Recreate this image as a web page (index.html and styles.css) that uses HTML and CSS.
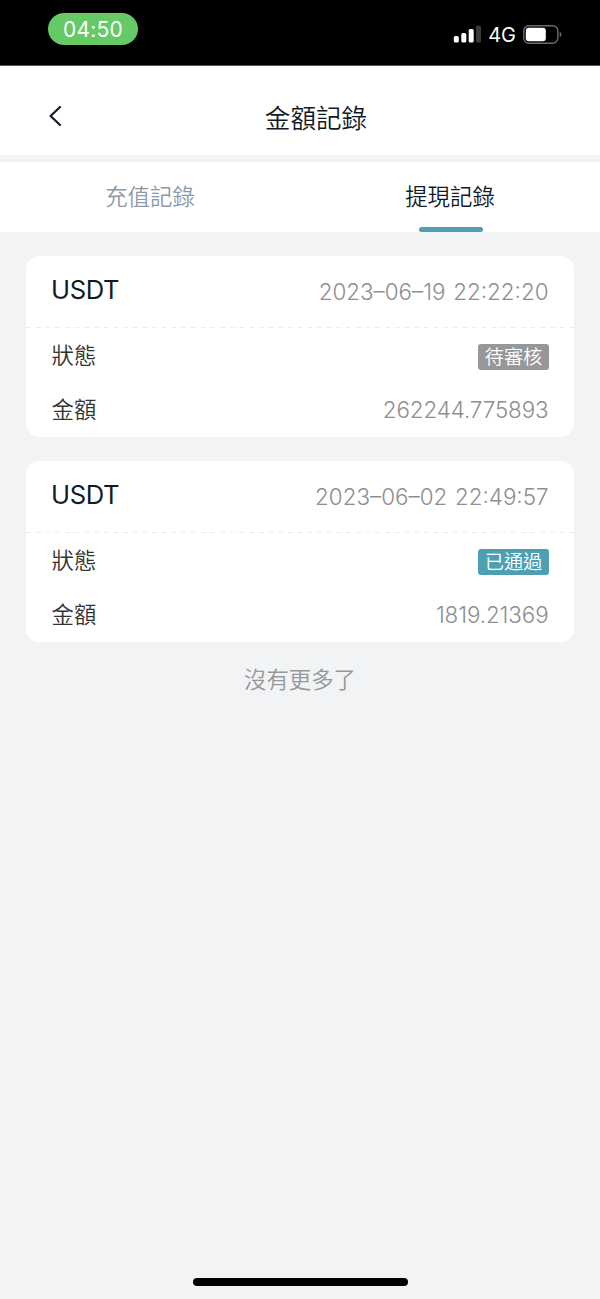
FILE: index.html
```html
<!DOCTYPE html>
<html lang="zh-Hant">
<head>
    <meta charset="UTF-8">
    <meta name="viewport" content="width=device-width, initial-scale=1.0">
    <title>金額記錄</title>
    <link rel="stylesheet" href="styles.css">
</head>
<body>

    <!-- Status bar -->
    <div class="status-bar">
        <span class="clock">04:50</span>
        <div class="status-icons">
            <svg class="signal" width="28" height="18" viewBox="0 0 28 18">
                <rect x="0.8" y="11" width="5" height="6.5" rx="1.6" fill="#fff"/>
                <rect x="8.3" y="8" width="5" height="9.5" rx="1.6" fill="#fff"/>
                <rect x="15.7" y="4" width="5" height="13.5" rx="1.6" fill="#fff"/>
                <rect x="23" y="0.5" width="5" height="17" rx="1.6" fill="#3a3a3a"/>
            </svg>
            <span class="network">4G</span>
            <svg class="battery" width="39" height="19" viewBox="0 0 39 19">
                <rect x="0.8" y="0.8" width="34" height="17.4" rx="5" fill="none" stroke="#6a6a6a" stroke-width="1.4"/>
                <rect x="2.8" y="2.8" width="20" height="13.4" rx="3" fill="#fff"/>
                <path d="M36.7 6.8c2.2 1 2.2 4.4 0 5.4z" fill="#6a6a6a"/>
            </svg>
        </div>
    </div>

    <!-- Header -->
    <header>
        <button class="back-btn" aria-label="返回">
            <svg width="14" height="22" viewBox="0 0 14 22">
                <path d="M12 2L2.6 11L12 20" fill="none" stroke="#111a27" stroke-width="2.2" stroke-linecap="round" stroke-linejoin="round"/>
            </svg>
        </button>
        <h1>金額記錄</h1>
    </header>

    <!-- Tabs -->
    <nav class="tabs">
        <div class="tab">充值記錄</div>
        <div class="tab active">提現記錄</div>
    </nav>

    <!-- Records -->
    <main>
        <div class="card">
            <div class="card-head">
                <h2>USDT</h2>
                <span class="value date">2023–06–19 22:22:20</span>
            </div>
            <svg class="divider" width="548" height="1"><path d="M0 0.5H548"/></svg>
            <div class="row">
                <span class="label">狀態</span>
                <span class="badge">待審核</span>
            </div>
            <div class="row">
                <span class="label">金額</span>
                <span class="value">262244.775893</span>
            </div>
        </div>

        <div class="card">
            <div class="card-head">
                <h2>USDT</h2>
                <span class="value date">2023–06–02 22:49:57</span>
            </div>
            <svg class="divider" width="548" height="1"><path d="M0 0.5H548"/></svg>
            <div class="row">
                <span class="label">狀態</span>
                <span class="badge passed">已通過</span>
            </div>
            <div class="row">
                <span class="label">金額</span>
                <span class="value">1819.21369</span>
            </div>
        </div>

        <p class="no-more">沒有更多了</p>
    </main>

    <!-- Home indicator -->
    <footer>
        <div class="home-bar"></div>
    </footer>

</body>
</html>
```
FILE: styles.css
```css
/* Basic Reset */
* {
    margin: 0;
    padding: 0;
    box-sizing: border-box;
}

body {
    display: flex;
    flex-direction: column;
    height: 1299px;
    background-color: #f1f3f5;
    color: #111a27;
    font-family: Inter, "Noto Sans CJK TC", sans-serif;
    font-weight: 350;
}

/* Status bar */
.status-bar {
    display: flex;
    justify-content: space-between;
    height: 66px;
    padding: 13px 38px 0 48px;
    background-color: #000;
    border-bottom: 1px solid #555;
    color: #fff;
}

.clock {
    width: 90px;
    height: 32px;
    border-radius: 16px;
    background-color: #65c966;
    font-size: 21px;
    font-weight: 400;
    letter-spacing: 0.2px;
    line-height: 33px;
    text-align: center;
}

.status-icons {
    display: flex;
    align-items: center;
    height: 42px;
}

.network {
    margin: 1px 7px 0 7px;
    font-size: 20px;
    font-weight: 400;
}

/* Header */
header {
    display: grid;
    grid-template-columns: 80px 1fr 80px;
    align-items: center;
    height: 89px;
    padding-top: 13px;
    background-color: #fff;
}

.back-btn {
    display: flex;
    padding: 0 0 2px 48px;
    border: none;
    background: none;
}

header h1 {
    padding: 4px 0 0 32px;
    font-size: 25.6px;
    font-weight: 350;
    text-align: center;
    line-height: 38px;
}

/* Tabs */
.tabs {
    display: flex;
    height: 70px;
    margin-top: 7px;
    background-color: #fff;
}

.tab {
    display: flex;
    flex-direction: column;
    align-items: center;
    width: 50%;
    color: #8d99a8;
    font-size: 22.4px;
    line-height: 70px;
}

.tab.active {
    color: #111a27;
}

.tab.active::after {
    content: "";
    width: 64px;
    height: 5px;
    margin: -5px 0 0 2px;
    border-radius: 3px;
    background-color: #4f9fb3;
}

/* Record cards */
main {
    flex: 1;
    padding: 24px 26px 0;
}

.card {
    height: 181px;
    margin-bottom: 24px;
    border-radius: 13px;
    background-color: #fff;
}

.card-head,
.row {
    display: flex;
    justify-content: space-between;
    align-items: center;
    padding: 0 26px;
}

.card-head {
    height: 71px;
}

.card-head h2 {
    padding-bottom: 4px;
    margin-left: -1px;
    font-size: 25.6px;
    font-weight: 400;
    letter-spacing: -0.4px;
}

.divider {
    display: block;
    stroke: #eceeef;
    stroke-dasharray: 5 4.7;
}

.row {
    height: 54px;
}

.label {
    padding-bottom: 2px;
    margin-left: -0.5px;
    color: #333;
    font-size: 22.4px;
}

.value {
    margin-right: -0.5px;
    color: #8e8f91;
    font-size: 22.4px;
    font-weight: 300;
    letter-spacing: -0.1px;
}

.value.date {
    letter-spacing: 0;
    word-spacing: 1.5px;
}

.badge {
    width: 71px;
    height: 26px;
    margin: 4px -1px 0 0;
    border-radius: 3px;
    background-color: #969799;
    color: #fff;
    font-size: 19.2px;
    line-height: 27px;
    text-align: center;
}

.badge.passed {
    background-color: #4f9fb3;
}

.no-more {
    margin-top: -2px;
    color: #969799;
    font-size: 22.4px;
    line-height: 32px;
    text-align: center;
}

/* Home indicator */
footer {
    padding-bottom: 13px;
}

.home-bar {
    width: 215px;
    height: 8px;
    margin: 0 auto;
    border-radius: 4px;
    background-color: #000;
}
```
